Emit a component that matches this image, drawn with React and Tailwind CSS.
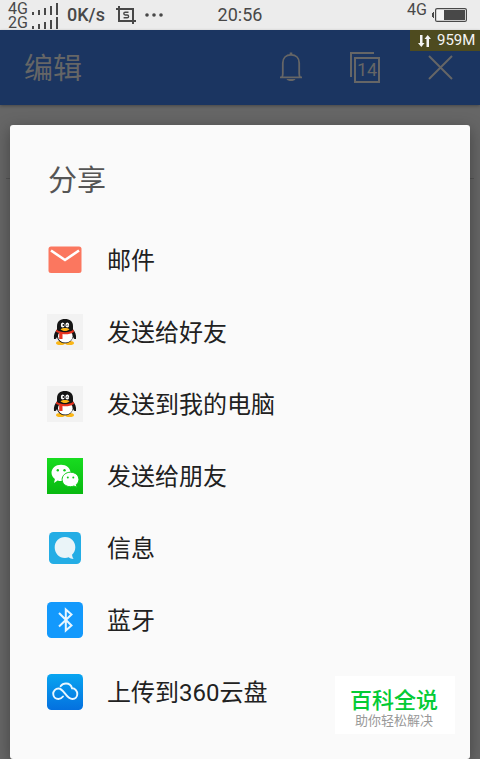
import React from "react";

function SignalBars() {
  return (
    <svg width="26" height="12" viewBox="0 0 26 12" fill="#484848" aria-hidden="true">
      <rect x="0" y="9" width="2" height="3" />
      <rect x="6" y="7" width="2" height="5" />
      <rect x="12" y="5" width="2" height="7" />
      <rect x="18" y="3" width="2" height="9" />
      <rect x="24" y="0" width="2" height="12" />
    </svg>
  );
}

function StatusBar() {
  return (
    <div className="grid h-[30px] grid-cols-3 bg-[#ececec] text-[#484848]">
      <div className="flex items-center pl-2">
        <div className="flex flex-col pt-px text-base leading-[14px]">
          <div className="flex items-center gap-[2px]"><span className="w-[22px]">4G</span><SignalBars /></div>
          <div className="flex items-center gap-[2px]"><span className="w-[22px]">2G</span><SignalBars /></div>
        </div>
        <span className="ml-[9px] text-lg font-medium">0K/s</span>
        <svg className="ml-[11px] shrink-0" width="20" height="18" viewBox="0 0 20 18" fill="none" stroke="#484848" strokeWidth="2" aria-hidden="true">
          <path d="M3 0v15h17M0 3h17v15" />
          <path d="M12.5 6.2H9.2a1.4 1.4 0 0 0 0 2.8h2a1.4 1.4 0 0 1 0 2.8H7.6" strokeWidth="1.4" />
        </svg>
        <svg className="ml-[9px] shrink-0" width="18" height="4" viewBox="0 0 18 4" fill="#484848" aria-hidden="true">
          <circle cx="2" cy="2" r="1.8" /><circle cx="9" cy="2" r="1.8" /><circle cx="16" cy="2" r="1.8" />
        </svg>
      </div>
      <div className="flex items-center justify-center text-lg">20:56</div>
      <div className="flex items-start justify-end pr-[13px]">
        <span className="text-base leading-[20px]">4G</span>
        <svg className="ml-[5px] mt-2" width="35" height="14" viewBox="0 0 35 14" aria-hidden="true">
          <path d="M2 4v6H1V9H0V5h1V4z" fill="#484848" />
          <rect x="3.6" y=".6" width="30.8" height="12.8" rx="1.5" fill="#f4f4f4" stroke="#484848" strokeWidth="1.2" />
          <rect x="12" y="2" width="21" height="10" fill="#484848" />
        </svg>
      </div>
    </div>
  );
}

function Header() {
  return (
    <header className="relative z-10 flex h-[75px] items-center justify-between bg-[#1b3561] pr-[27px] pl-6 text-[#666666] shadow-[0_1px_3px_rgba(0,0,0,0.3)]">
      <h1 className="pt-[2px] text-[29px] leading-[40px]">编辑</h1>
      <div className="flex items-center gap-12">
        <button type="button" aria-label="通知">
          <svg width="22" height="32" viewBox="0 0 22 32" fill="none" stroke="#666" strokeWidth="1.8">
            <path d="M0 25.300h22M1.800 25.300c1-1 1-1.800 1-3.500V11C2.800 6 6 2.900 11 2.900S19.200 6 19.200 11v10.800c0 1.700 0 2.500 1 3.500" />
            <path d="M11 .5v2.500" strokeWidth="2.600" />
            <path d="M6.500 27h9c-1 2.800-8 2.800-9 0z" fill="#666" stroke="none" />
          </svg>
        </button>
        <button type="button" aria-label="14 个页面" className="relative">
          <svg width="30" height="32" viewBox="0 0 30 32" fill="none" stroke="#666" strokeWidth="2">
            <path d="M24 1H1v24" />
            <rect x="5" y="6" width="24" height="24" />
          </svg>
          <span className="absolute inset-x-0 top-2 pl-1 text-center text-lg leading-5">14</span>
        </button>
        <button type="button" aria-label="关闭">
          <svg width="25" height="32" viewBox="0 0 25 32" fill="none" stroke="#666" strokeWidth="2">
            <path d="M1 4l23 23M24 4L1 27" />
          </svg>
        </button>
      </div>
      <div className="absolute top-0 right-0 flex h-[21px] w-[70px] items-center gap-[6px] bg-[#4e4b1f] pl-2 text-[15px] text-[#f4f4f4]">
        <svg width="13" height="12" viewBox="0 0 13 12" fill="#f4f4f4" aria-hidden="true">
          <path d="M2 0h2.500v8H6.500L3.300 12 0 8h2zM8.500 12H11V4h2L9.700 0 6.500 4h2z" />
        </svg>
        <span>959M</span>
      </div>
    </header>
  );
}

function MailIcon() {
  return (
    <svg width="36" height="36" viewBox="0 0 36 36">
      <rect x="1.500" y="4.500" width="33" height="26.500" rx="2.500" fill="#fb775f" />
      <path d="M4 8.500l14 9.500 14-9.500" fill="none" stroke="#fff" strokeWidth="2.600" />
    </svg>
  );
}

function PenguinIcon() {
  return (
    <svg width="36" height="36" viewBox="0 0 36 36">
      <rect width="36" height="36" fill="#f2f2f2" />
      <ellipse cx="13.500" cy="29" rx="4.500" ry="2" fill="#fbb615" />
      <ellipse cx="22.500" cy="29" rx="4.500" ry="2" fill="#fbb615" />
      <path d="M10 15.500c-2 2-3.600 5.500-3 9.500 1.500.5 2.500-.8 3-2 1 4 4 6.300 8 6.300s7-2.300 8-6.300c.5 1.200 1.500 2.500 3 2 .6-4-1-7.500-3-9.500z" fill="#151515" />
      <ellipse cx="18.300" cy="22.200" rx="7.300" ry="6.300" fill="#fff" />
      <path d="M10 15.500V12C10 7.500 13.300 5 18 5s8 2.500 8 7v3.500c0 2-3.500 4-8 4s-8-2-8-4z" fill="#151515" />
      <ellipse cx="15.700" cy="11" rx="1.900" ry="2.500" fill="#fff" />
      <ellipse cx="20.300" cy="11" rx="1.900" ry="2.500" fill="#fff" />
      <circle cx="16.400" cy="11" r=".9" fill="#151515" />
      <path d="M19.600 11.500c0-1 1.400-1 1.400 0" stroke="#151515" strokeWidth=".8" fill="none" />
      <path d="M13.500 15.300c2-1.800 7-1.800 9 0-2 2.400-7 2.400-9 0z" fill="#fbb615" />
      <path d="M9.500 15.500c4 3.600 13 3.600 17 0l.5 2.500c-3.200 2.200-8 2.600-11.500 2.100V25h-3.300v-6c-1.300-.3-2.400-.7-3.200-1.300z" fill="#e83420" />
    </svg>
  );
}

function WechatIcon() {
  return (
    <svg width="36" height="36" viewBox="0 0 36 36">
      <defs>
        <linearGradient id="wechat" x1="0" y1="0" x2="0" y2="1">
          <stop offset="0" stopColor="#18dc20" /><stop offset="1" stopColor="#08b810" />
        </linearGradient>
      </defs>
      <rect width="36" height="36" fill="url(#wechat)" />
      <path d="M14 6.700c5.400 0 9.600 3.500 9.600 8.100S19.400 23 14 23c-1.200 0-2.400-.2-3.400-.6L7 25l.9-4c-2-1.500-3.400-3.800-3.400-6.200 0-4.600 4.100-8.100 9.500-8.100z" fill="#fff" />
      <path d="M23.500 14.200c4.700 0 8.400 3.200 8.400 7.300 0 2-1 3.800-2.600 5l.7 2.800-3.100-1.300c-1 .4-2.200.7-3.400.7-4.700 0-8.400-3.100-8.400-7.200s3.700-7.300 8.400-7.300z" fill="#fff" stroke="#11ca18" strokeWidth="1" />
      <g fill="#10ca18">
        <circle cx="10.800" cy="12.300" r="1.200" /><circle cx="17.500" cy="12.300" r="1.200" />
        <circle cx="20.800" cy="19.500" r="1" /><circle cx="26.300" cy="19.500" r="1" />
      </g>
    </svg>
  );
}

function MessageIcon() {
  return (
    <svg width="36" height="36" viewBox="0 0 36 36">
      <rect x="2" y="2" width="32" height="32" rx="4.500" fill="#24ade5" />
      <path d="M18 7c6 0 10.300 4.500 10.300 10.200 0 3-1.300 5.500-3.300 7.500.2 1.600.7 3 1.500 4.300-1.800-.1-3.500-.8-4.800-1.700-1.200.4-2.400.6-3.700.6-6 0-10.300-4.700-10.300-10.500S12 7 18 7z" fill="#eaf4f8" />
    </svg>
  );
}

function BluetoothIcon() {
  return (
    <svg width="36" height="36" viewBox="0 0 36 36">
      <rect width="36" height="36" rx="4.500" fill="#1399fc" />
      <path d="M12 11l12.500 12.500-5.700 5V7.500l5.700 5L12 24.500" fill="none" stroke="#e8f6ff" strokeWidth="2" />
    </svg>
  );
}

function CloudIcon() {
  return (
    <svg width="36" height="36" viewBox="0 0 36 36">
      <defs>
        <linearGradient id="cloud" x1="0" y1="0" x2="0" y2="1">
          <stop offset="0" stopColor="#08a5f1" /><stop offset="1" stopColor="#0470df" />
        </linearGradient>
      </defs>
      <rect width="36" height="36" rx="4.500" fill="url(#cloud)" />
      <path d="M16 22.500c-1.200 1.500-2.600 2.500-4.500 2.500C8.500 25 6.200 22.700 6.200 19.800s2.300-5.300 5.300-5.300c5.500 0 7.500 10.500 14 10.500 2.700 0 4.800-2.200 4.800-5s-2-5.700-5.300-5.700c-.7-3-3.200-4.800-6-4.800-2.300 0-4.200 1-5.400 2.800" fill="none" stroke="#eaf7ff" strokeWidth="1.900" strokeLinecap="round" />
    </svg>
  );
}

const targets = [
  { label: "邮件", Icon: MailIcon },
  { label: "发送给好友", Icon: PenguinIcon },
  { label: "发送到我的电脑", Icon: PenguinIcon },
  { label: "发送给朋友", Icon: WechatIcon },
  { label: "信息", Icon: MessageIcon },
  { label: "蓝牙", Icon: BluetoothIcon },
  { label: "上传到360云盘", Icon: CloudIcon },
];

function ShareDialog() {
  return (
    <section role="dialog" aria-labelledby="share-title" className="relative flex-1 rounded-[3px] bg-[#fafafa] pt-9 pb-[31px] shadow-[0_4px_16px_rgba(0,0,0,0.35)]">
      <h2 id="share-title" className="px-[38px] text-[29px] leading-[40px] text-[#555555]">分享</h2>
      <ul className="mt-[23px]">
        {targets.map(({ label, Icon }) => (
          <li key={label}>
            <button type="button" className="flex h-[72px] w-full items-center gap-6 px-[37px] text-left text-2xl text-[#212121]">
              <Icon />
              <span className="pt-[2px]">{label}</span>
            </button>
          </li>
        ))}
      </ul>
      <div className="absolute right-[15px] bottom-[25px] flex h-[58px] w-[120px] flex-col items-center bg-white pt-[11px] pr-[2px]">
        <strong className="text-[22px] leading-[27px] font-medium text-[#05cb35]">百科全说</strong>
        <span className="text-[13px] leading-[14px] text-[#999999]">助你轻松解决</span>
      </div>
    </section>
  );
}

export default function App() {
  return (
    <div className="flex min-h-screen flex-col bg-[#666666] font-[Roboto,'Noto_Sans_CJK_SC',sans-serif]">
      <StatusBar />
      <Header />
      <main className="relative flex flex-1 flex-col px-[10px] pt-5">
        <div className="absolute inset-x-[6px] top-[73px] h-px bg-[#555555]" />
        <ShareDialog />
      </main>
    </div>
  );
}
